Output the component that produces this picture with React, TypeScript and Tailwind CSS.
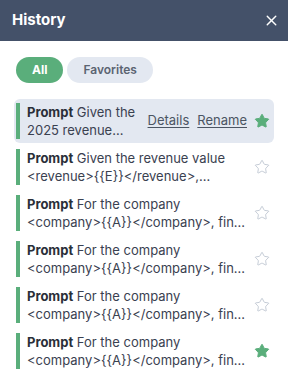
import React, { useState } from 'react'
import { Star, X } from 'lucide-react'

interface HistoryItem {
  id: number
  text: string
  favorite: boolean
}

const items: HistoryItem[] = [
  { id: 1, text: 'Given the 2025 revenue value <revenue>{{E}}</revenue>, compute growth', favorite: true },
  { id: 2, text: 'Given the revenue value <revenue>{{E}}</revenue>, compute the margin', favorite: false },
  { id: 3, text: 'For the company <company>{{A}}</company>, find the latest filing', favorite: false },
  { id: 4, text: 'For the company <company>{{A}}</company>, find the latest filing', favorite: false },
  { id: 5, text: 'For the company <company>{{A}}</company>, find the latest filing', favorite: false },
  { id: 6, text: 'For the company <company>{{A}}</company>, find the latest filing', favorite: true },
]

const HistoryRow = ({ item, active }: { item: HistoryItem; active: boolean }) => {
  return (
    <div className={`rounded-md py-[4px] pl-[2px] pr-[4px] ${active ? 'bg-[#e3e8f1]' : ''}`}>
      <div className="flex items-center border-l-4 border-[#5aae7b] pl-[7px]">
        <p className={`line-clamp-2 text-[13px] leading-[18px] text-[#3a4150] ${active ? 'w-[114px]' : 'w-[222px]'}`}>
          <span className="font-bold text-[#2a2f38]">Prompt</span> {item.text}
        </p>
        {active && (
          <div className="ml-auto flex items-center gap-2 text-[13px] text-[#4b5563]">
            <button className="underline underline-offset-2">Details</button>
            <button className="underline underline-offset-2">Rename</button>
          </div>
        )}
        <button className={`${active ? 'ml-[7px]' : 'ml-auto'} flex h-[16px] w-[16px] items-center justify-center`}>
          {item.favorite ? (
            <Star size={16} strokeWidth={1.5} className="fill-[#5aae7b] text-[#5aae7b]" />
          ) : (
            <Star size={16} strokeWidth={1.2} className="text-[#b6bfcc]" />
          )}
        </button>
      </div>
    </div>
  )
}

export default function App() {
  const [tab, setTab] = useState<'all' | 'favorites'>('all')

  return (
    <div className="h-[391px] w-[288px] bg-white font-['Inter',sans-serif]">
      <div className="flex h-[41px] items-center justify-between bg-[#445169] pl-3 pr-[8px]">
        <h1 className="text-[15px] font-bold text-white">History</h1>
        <X size={17} strokeWidth={2} className="text-white" />
      </div>

      <div className="flex gap-1 px-4 pt-[16px]">
        <button
          onClick={() => setTab('all')}
          className={`rounded-full px-4 py-[4px] text-[12px] font-bold ${tab === 'all' ? 'bg-[#5aae7b] text-white' : 'bg-[#e3e8f1] text-[#5b6472]'}`}
        >
          All
        </button>
        <button
          onClick={() => setTab('favorites')}
          className={`rounded-full px-4 py-[4px] text-[12px] font-semibold ${tab === 'favorites' ? 'bg-[#5aae7b] text-white' : 'bg-[#e3e8f1] text-[#5b6472]'}`}
        >
          Favorites
        </button>
      </div>

      <div className="flex flex-col gap-[2px] px-[14px] pt-[16px]">
        {items
          .filter(i => tab === 'all' || i.favorite)
          .map((item, idx) => (
            <HistoryRow key={item.id} item={item} active={idx === 0} />
          ))}
      </div>
    </div>
  )
}
